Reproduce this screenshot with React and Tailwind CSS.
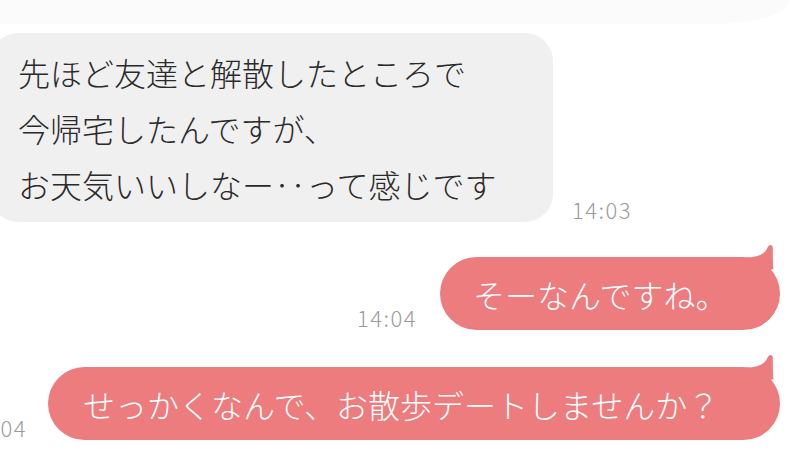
import React from "react";

const jp = { fontFamily: '"Noto Sans CJK JP", "Noto Sans", sans-serif' };

function Tail() {
  return (
    <svg
      className="absolute right-[-2px] top-[-14px]"
      width="40"
      height="32"
      viewBox="0 0 40 32"
    >
      <path
        d="M4 14.5 C16 14.5 23 11 25.5 4.5 C27 1 30.5 1 30.8 4.5 C31 12 30.5 18 31.5 26 L18 30 Z"
        fill="#ec7c7e"
      />
    </svg>
  );
}

function Time({ children }) {
  return (
    <div className="shrink-0 text-[22px] leading-[24px] tracking-[1.5px] font-light text-[#9b9b9b] mb-[1px]" style={jp}>
      {children}
    </div>
  );
}

export default function App() {
  return (
    <div className="w-[800px] h-[457px] overflow-hidden bg-white flex flex-col font-light" style={jp}>
      <div className="h-[24px] w-[790px] shrink-0 bg-[#fbfbfb] rounded-br-[80px_24px]" />

      <div className="mt-[9px] flex items-end gap-[19px] ml-[-10px]">
        <div className="w-[563px] h-[189px] shrink-0 bg-[#f0f0f0] rounded-[28px] pl-[28px] pt-[11px] text-[32px] leading-[56px] text-[#2a2a2a]">
          <div>先ほど友達と解散したところで</div>
          <div>今帰宅したんですが、</div>
          <div>お天気いいしなー‥って感じです</div>
        </div>
        <Time>14:03</Time>
      </div>

      <div className="mt-[35px] flex items-end justify-end gap-[23px] pr-[20px]">
        <Time>14:04</Time>
        <div className="relative shrink-0 w-[340px] h-[73px] bg-[#ec7c7e] rounded-full flex items-center pl-[33px] text-[32px] text-white">
          <Tail />
          <span className="relative">そーなんですね。</span>
        </div>
      </div>

      <div className="mt-[37px] flex items-end justify-end gap-[21px] pr-[20px]">
        <Time>14:04</Time>
        <div className="relative shrink-0 w-[732px] h-[73px] bg-[#ec7c7e] rounded-full flex items-center pl-[35px] text-[32px] text-white">
          <Tail />
          <span className="relative">せっかくなんで、お散歩デートしませんか？</span>
        </div>
      </div>
    </div>
  );
}
